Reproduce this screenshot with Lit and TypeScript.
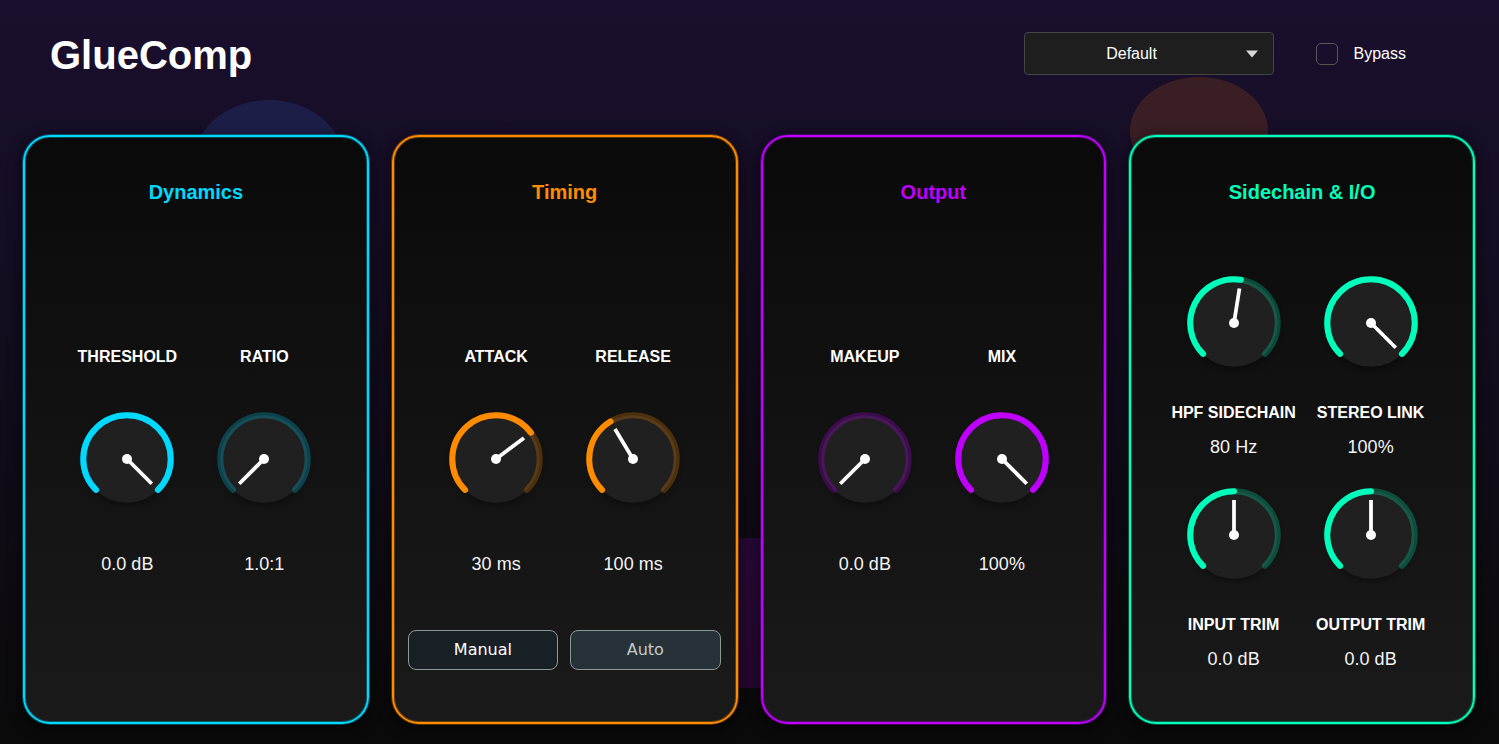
import { LitElement, html, css, svg, nothing } from "lit";
import { customElement, property } from "lit/decorators.js";
import { classMap } from "lit/directives/class-map.js";

interface KnobSpec {
  name: string;
  value: string;
  angle: number;
}

interface PanelSpec {
  title: string;
  tone: string;
  dense?: boolean;
  modes?: string[];
  knobs: KnobSpec[];
}

const START = -135;
const END = 135;

const PANELS: PanelSpec[] = [
  {
    title: "Dynamics",
    tone: "cyan",
    knobs: [
      { name: "THRESHOLD", value: "0.0 dB", angle: END },
      { name: "RATIO", value: "1.0:1", angle: START },
    ],
  },
  {
    title: "Timing",
    tone: "orange",
    modes: ["Manual", "Auto"],
    knobs: [
      { name: "ATTACK", value: "30 ms", angle: 53 },
      { name: "RELEASE", value: "100 ms", angle: -31 },
    ],
  },
  {
    title: "Output",
    tone: "violet",
    knobs: [
      { name: "MAKEUP", value: "0.0 dB", angle: START },
      { name: "MIX", value: "100%", angle: END },
    ],
  },
  {
    title: "Sidechain & I/O",
    tone: "mint",
    dense: true,
    knobs: [
      { name: "HPF SIDECHAIN", value: "80 Hz", angle: 9 },
      { name: "STEREO LINK", value: "100%", angle: END },
      { name: "INPUT TRIM", value: "0.0 dB", angle: 0 },
      { name: "OUTPUT TRIM", value: "0.0 dB", angle: 0 },
    ],
  },
];

function arc(from: number, to: number, r: number): string {
  const at = (deg: number) => {
    const a = (deg * Math.PI) / 180;
    return `${(Math.sin(a) * r).toFixed(2)} ${(-Math.cos(a) * r).toFixed(2)}`;
  };
  return `M${at(from)} A${r} ${r} 0 ${to - from > 180 ? 1 : 0} 1 ${at(to)}`;
}

@customElement("comp-knob")
export class CompKnob extends LitElement {
  @property() name = "";
  @property() value = "";
  @property({ type: Number }) angle = 0;
  @property({ type: Boolean }) dense = false;

  static styles = css`
    :host {
      display: block;
    }
    .knob {
      display: flex;
      flex-direction: column;
      align-items: center;
      font-family: "Liberation Sans", Arial, sans-serif;
      color: #fff;
    }
    .name {
      font-size: 16px;
      line-height: 20px;
      font-weight: 700;
      white-space: nowrap;
    }
    .value {
      font-size: 18px;
      line-height: 20px;
      color: #f4f4f4;
    }
    .dial {
      display: grid;
      width: 100px;
      height: 100px;
      margin: 42px 0 45px;
    }
    .dial > * {
      grid-area: 1 / 1;
      width: 100%;
      height: 100%;
      margin: 0;
    }
    .range {
      opacity: 0;
      cursor: pointer;
    }
    .face {
      fill: #202020;
      filter: drop-shadow(0 2px 3px rgba(0, 0, 0, 0.4));
    }
    .track,
    .fill {
      fill: none;
      stroke: var(--tone);
      stroke-width: 6;
      stroke-linecap: round;
    }
    .track {
      opacity: 0.25;
    }
    .pointer {
      stroke: #fff;
      stroke-width: 3.75;
    }
    .hub {
      fill: #fff;
    }
    .dense {
      gap: 14px;
      padding: 25px 0 3px;
    }
    .dense .dial {
      order: -1;
      margin: 0 0 16px;
    }
  `;

  render() {
    return html`
      <div class=${classMap({ knob: true, dense: this.dense })}>
        <label class="name" for="range">${this.name}</label>
        <div class="dial">
          <svg viewBox="-50 -50 100 100" aria-hidden="true">
            <circle class="face" r="43.75" />
            <path class="track" d=${arc(START, END, 43.75)} />
            ${this.angle > START
              ? svg`<path class="fill" d=${arc(START, this.angle, 43.75)} />`
              : nothing}
            <line class="pointer" y2="-35" transform="rotate(${this.angle})" />
            <circle class="hub" r="5" />
          </svg>
          <input
            class="range"
            id="range"
            type="range"
            min=${START}
            max=${END}
            .value=${String(this.angle)}
            aria-valuetext=${this.value}
            @input=${(e: Event) => {
              this.angle = Number((e.target as HTMLInputElement).value);
            }}
          />
        </div>
        <output class="value" for="range">${this.value}</output>
      </div>
    `;
  }
}

@customElement("app-root")
export class AppRoot extends LitElement {
  static styles = css`
    :host {
      display: block;
      font-family: "Liberation Sans", Arial, sans-serif;
      color: #fff;
    }
    *,
    *::before,
    *::after {
      box-sizing: border-box;
    }
    .plugin {
      position: relative;
      isolation: isolate;
      overflow: hidden;
      display: flex;
      flex-direction: column;
      min-height: 100vh;
      padding: 0 24px 20px 23px;
      background: linear-gradient(#1a0f2e, #0a0a0a);
    }
    .shapes {
      position: absolute;
      inset: 0;
      z-index: -1;
      width: 100%;
      height: 100%;
    }
    .header {
      display: flex;
      align-items: center;
      height: 107px;
      padding: 0 69px 0 27px;
      margin-bottom: 28px;
    }
    .brand {
      margin: 0 auto 0 0;
      padding-top: 2px;
      font-size: 40px;
      line-height: 48px;
      font-weight: 700;
    }
    .preset {
      display: grid;
      align-items: center;
      width: 250px;
      margin-right: 42px;
    }
    .preset > * {
      grid-area: 1 / 1;
    }
    .select {
      appearance: none;
      width: 100%;
      height: 43px;
      padding: 0 34px 0 0;
      border: 1px solid #454545;
      border-radius: 4px;
      background: #1e1e1e;
      color: #fff;
      font: 16px/20px "Liberation Sans", Arial, sans-serif;
      text-align: center;
      text-align-last: center;
    }
    .caret {
      justify-self: end;
      width: 12px;
      height: 8px;
      margin-right: 16px;
      fill: #d8d8d8;
      pointer-events: none;
    }
    .bypass {
      display: flex;
      align-items: center;
      gap: 16px;
      font-size: 16px;
      line-height: 20px;
      padding-top: 1px;
    }
    .check {
      appearance: none;
      width: 22px;
      height: 22px;
      margin: 0;
      border: 1px solid #58555c;
      border-radius: 5px;
    }
    .check:checked {
      background: #00d9ff;
    }
    .panels {
      flex: 1;
      display: grid;
      grid-template-columns: repeat(4, minmax(0, 1fr));
      gap: 23px;
    }
    .panel {
      display: grid;
      grid-template-rows: 154px 1fr 92px;
      border: 2px solid var(--tone);
      border-radius: 27px;
      background: linear-gradient(#0a0a0a, #1a1a1a);
      box-shadow:
        0 0 0 1px color-mix(in srgb, var(--tone) 30%, transparent),
        inset 0 0 0 1px color-mix(in srgb, var(--tone) 30%, transparent),
        0 4px 12px 3px rgba(0, 0, 0, 0.5);
    }
    .panel.dense {
      grid-template-rows: 78px 1fr 18px;
    }
    .cyan {
      --tone: #00d9ff;
    }
    .orange {
      --tone: #ff8c00;
    }
    .violet {
      --tone: #bf00ff;
    }
    .mint {
      --tone: #00ffbb;
    }
    .title {
      margin: 0;
      padding-top: 43px;
      font-size: 20px;
      line-height: 24px;
      font-weight: 700;
      text-align: center;
      color: var(--tone);
    }
    .knobs {
      display: grid;
      grid-template-columns: repeat(2, 137px);
      place-content: center;
    }
    .modes {
      display: grid;
      grid-template-columns: 1fr 1fr;
      align-items: start;
      gap: 12px;
      padding: 0 15px 0 14px;
    }
    .mode {
      height: 40px;
      padding: 0;
      border: 1px solid #8c9798;
      border-radius: 8px;
      background: #263238;
      color: #c4c8ca;
      font: 16px/20px "DejaVu Sans", Verdana, sans-serif;
    }
    .mode[aria-pressed="true"] {
      background: #192025;
      color: #fff;
    }
  `;

  render() {
    return html`
      <main class="plugin">
        <svg
          class="shapes"
          viewBox="0 0 1499 744"
          preserveAspectRatio="none"
          aria-hidden="true"
        >
          <ellipse cx="269" cy="162" rx="75" ry="62" fill="#3a80ff" opacity="0.15" />
          <ellipse cx="1199" cy="131" rx="69" ry="54" fill="#ff8010" opacity="0.15" />
          <rect x="675" y="538" width="150" height="150" fill="#bf00ff" opacity="0.15" />
        </svg>
        <header class="header">
          <h1 class="brand">GlueComp</h1>
          <div class="preset">
            <select class="select" aria-label="Preset">
              <option>Default</option>
            </select>
            <svg class="caret" viewBox="0 0 12 8" aria-hidden="true">
              <path d="M0 0.5H12L6 7.5Z" />
            </svg>
          </div>
          <label class="bypass">
            <input class="check" type="checkbox" />
            Bypass
          </label>
        </header>
        <div class="panels">
          ${PANELS.map(
            (p) => html`
              <section class=${classMap({ panel: true, dense: !!p.dense, [p.tone]: true })}>
                <h2 class="title">${p.title}</h2>
                <div class="knobs">
                  ${p.knobs.map(
                    (k) => html`
                      <comp-knob
                        .name=${k.name}
                        .value=${k.value}
                        .angle=${k.angle}
                        .dense=${!!p.dense}
                      ></comp-knob>
                    `
                  )}
                </div>
                ${p.modes
                  ? html`<div class="modes">
                      ${p.modes.map(
                        (m, i) => html`
                          <button class="mode" type="button" aria-pressed=${i === 0}>
                            ${m}
                          </button>
                        `
                      )}
                    </div>`
                  : nothing}
              </section>
            `
          )}
        </div>
      </main>
    `;
  }
}
